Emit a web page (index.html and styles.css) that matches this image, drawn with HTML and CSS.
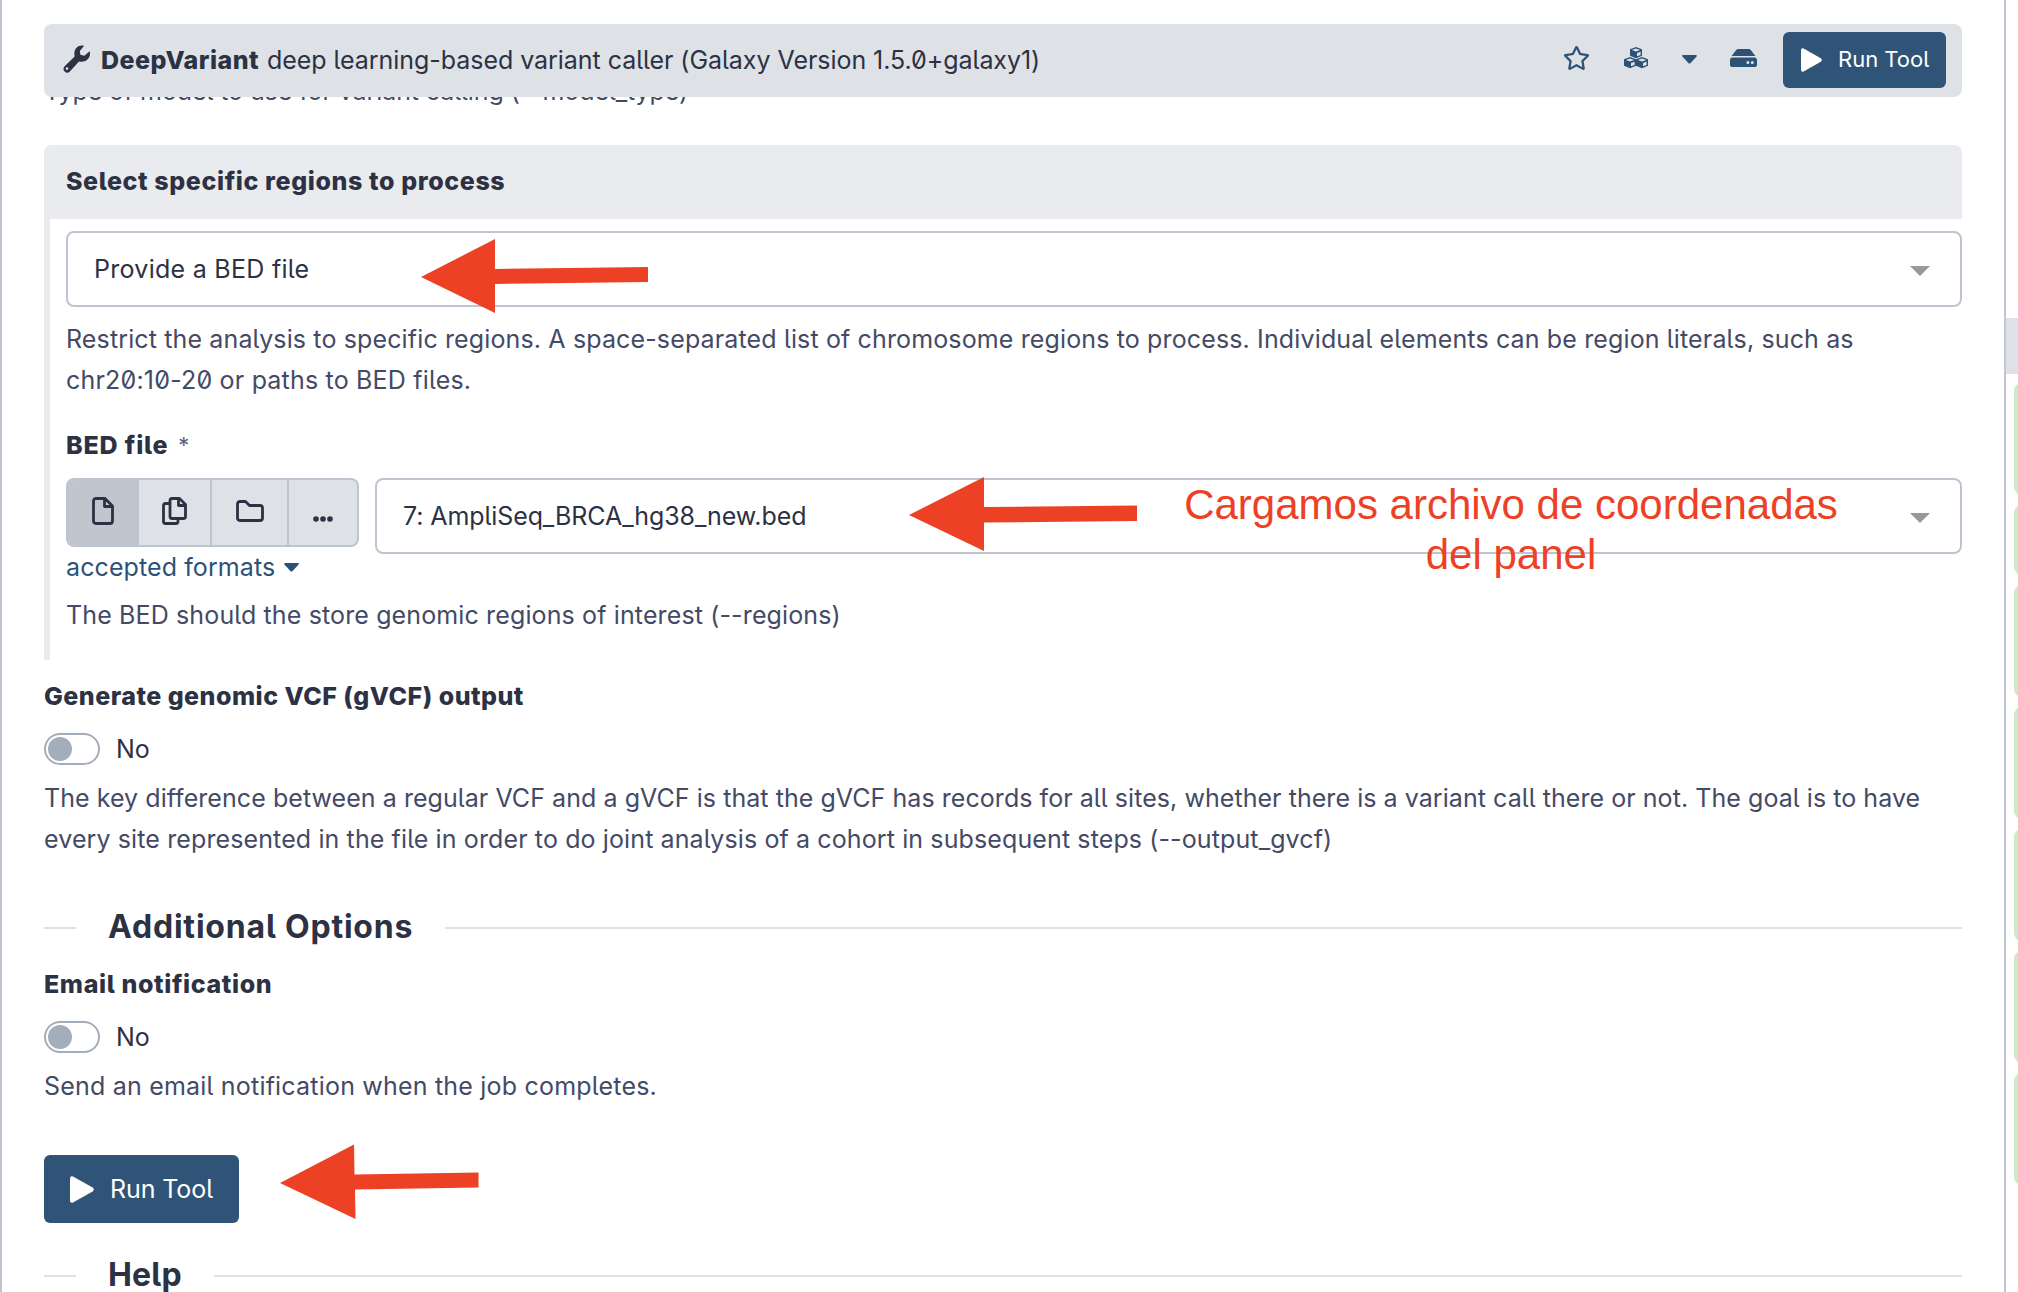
FILE: index.html
```html
<!DOCTYPE html>
<html lang="en">
<head>
<meta charset="utf-8">
<title>DeepVariant</title>
<link rel="stylesheet" href="styles.css">
</head>
<body>
<div class="app">
  <main class="center-panel">
    <header class="tool-header">
      <svg class="icon-wrench" viewBox="0 0 28 28"><path d="M26.6 6.2 21.4 10.8 17.4 9.8 16.8 6 21 0.9C16 -0.6 10.8 3 11.4 9.6L11.6 11.4 1.4 21.6A3.7 3.7 0 0 0 6.6 26.8L16 16.6C23 18 28.6 12.6 26.6 6.2ZM4 25A1.4 1.4 0 1 1 4 22.2 1.4 1.4 0 0 1 4 25Z" fill-rule="evenodd"/></svg>
      <h1 class="tool-title"><b class="tool-name">DeepVariant</b><span class="tool-desc">deep learning-based variant caller (Galaxy Version 1.5.0+galaxy1)</span></h1>
      <div class="tool-actions">
        <svg class="icon-star" viewBox="0 0 576 512"><path d="M528.1 171.5L382 150.2 316.7 17.8c-11.7-23.6-45.6-23.9-57.4 0L194 150.2 47.9 171.5c-26.2 3.8-36.7 36.1-17.7 54.6l105.7 103-25 145.5c-4.5 26.3 23.2 46 46.4 33.7L288 439.6l130.7 68.7c23.2 12.2 50.9-7.4 46.4-33.7l-25-145.5 105.7-103c19-18.5 8.5-50.8-17.7-54.6zM388.6 312.3l23.7 138.4L288 385.4l-124.3 65.3 23.7-138.4-100.6-98 139-20.2 62.2-126 62.2 126 139 20.2-100.6 98z"/></svg>
        <svg class="icon-cubes" viewBox="0 0 24 22"><g id="cube"><path d="M12 0 18 2.2V8.8L12 11.2 6 8.8V2.2Z"/><path class="face" d="M12 1.6 16.2 3 12 4.5 7.8 3ZM13 6 16.6 4.7V7.9L13 9.3Z"/></g><use href="#cube" x="-6" y="10"/><use href="#cube" x="6" y="10"/></svg>
        <svg class="icon-caret" viewBox="0 0 15 9"><path d="M1.2 0H13.8Q15.6 .3 14.4 1.8L8.4 8.2Q7.5 9 6.6 8.2L.6 1.8Q-.6 .3 1.2 0Z"/></svg>
        <svg class="icon-drive" viewBox="0 0 27 18"><path d="M1.6 7 6 1.2Q6.9 0 8.4 0H18.6Q20.1 0 21 1.2L25.4 7ZM2.6 8.4H24.4Q27 8.4 27 11V15.4Q27 18 24.4 18H2.6Q0 18 0 15.4V11Q0 8.4 2.6 8.4ZM17.9 11.9A1.4 1.4 0 1 0 17.9 14.9 1.4 1.4 0 0 0 17.9 11.9ZM22.3 11.9A1.4 1.4 0 1 0 22.3 14.9 1.4 1.4 0 0 0 22.3 11.9Z" fill-rule="evenodd"/></svg>
        <button class="run run-small"><svg class="icon-play" viewBox="0 0 24 27"><path d="M0 2.4Q.2 -.6 3 .4L22.6 11.6Q25 13.5 22.6 15.4L3 26.6Q.2 27.6 0 24.6Z"/></svg><span>Run Tool</span></button>
      </div>
    </header>
    <p class="help model-help">Type of model to use for variant calling (--model_type)</p>

    <section class="conditional">
      <h2 class="label conditional-title">Select specific regions to process</h2>
      <div class="conditional-body">
        <div class="select"><span class="t-provide">Provide a BED file</span><i class="select-caret"></i></div>
        <p class="help restrict-help"><span>Restrict the analysis to specific regions. A space-separated list of chromosome regions to process. Individual elements can be region literals, such as</span><br><span class="t-chr">chr20:10-20 or paths to BED files.</span></p>
        <h3 class="label bed-label"><span>BED file</span><span class="required">*</span></h3>
        <div class="data-row">
          <div class="data-side">
            <div class="button-group">
              <button class="active"><svg class="icon-file" viewBox="0 0 22 28"><path d="M4 1.5H13L20.5 9V24Q20.5 26.5 18 26.5H4Q1.5 26.5 1.5 24V4Q1.5 1.5 4 1.5ZM12.5 1.5V9.5H20.5"/></svg></button>
              <button><svg class="icon-copy" viewBox="0 0 25 28"><path d="M10 1.5H17.5L23.5 7.5V19.5Q23.5 21.5 21.5 21.5H10Q8 21.5 8 19.5V3.5Q8 1.5 10 1.5ZM16.5 1.5V8.5H23.5M8 6.5H3.5Q1.5 6.5 1.5 8.5V24.5Q1.5 26.5 3.5 26.5H14Q16 26.5 16 24.5V21.5"/></svg></button>
              <button><svg class="icon-folder" viewBox="0 0 28 22"><path d="M4 1.5H9.5L13.5 5.5H24Q26.5 5.5 26.5 8V18Q26.5 20.5 24 20.5H4Q1.5 20.5 1.5 18V4Q1.5 1.5 4 1.5Z"/></svg></button>
              <button><svg class="icon-dots" viewBox="0 0 20 6"><circle cx="3" cy="3" r="2.8"/><circle cx="10" cy="3" r="2.8"/><circle cx="17" cy="3" r="2.8"/></svg></button>
            </div>
            <a class="formats"><span>accepted formats</span><svg class="icon-caret" viewBox="0 0 15 9"><path d="M1.2 0H13.8Q15.6 .3 14.4 1.8L8.4 8.2Q7.5 9 6.6 8.2L.6 1.8Q-.6 .3 1.2 0Z"/></svg></a>
          </div>
          <div class="select data-select"><span>7: AmpliSeq_BRCA_hg38_new.bed</span><i class="select-caret"></i></div>
        </div>
        <p class="help bed-help">The BED should the store genomic regions of interest (--regions)</p>
      </div>
    </section>

    <section class="field">
      <h3 class="label generate-label">Generate genomic VCF (gVCF) output</h3>
      <div class="switch-row"><span class="switch"></span><span class="no">No</span></div>
      <p class="help gvcf-help"><span>The key difference between a regular VCF and a gVCF is that the gVCF has records for all sites, whether there is a variant call there or not. The goal is to have</span><br><span class="t-every">every site represented in the file in order to do joint analysis of a cohort in subsequent steps (--output_gvcf)</span></p>
    </section>

    <h2 class="separator options-separator"><span>Additional Options</span></h2>

    <section class="field email-field">
      <h3 class="label">Email notification</h3>
      <div class="switch-row"><span class="switch"></span><span class="no">No</span></div>
      <p class="help send-help">Send an email notification when the job completes.</p>
    </section>

    <button class="run run-large"><svg class="icon-play" viewBox="0 0 24 27"><path d="M0 2.4Q.2 -.6 3 .4L22.6 11.6Q25 13.5 22.6 15.4L3 26.6Q.2 27.6 0 24.6Z"/></svg><span>Run Tool</span></button>

    <h2 class="separator help-separator"><span>Help</span></h2>
  </main>
  <aside class="history">
    <div class="history-bar"></div>
    <div class="dataset"></div>
    <div class="dataset dataset-short"></div>
    <div class="dataset"></div>
    <div class="dataset"></div>
    <div class="dataset"></div>
    <div class="dataset"></div>
    <div class="dataset"></div>
  </aside>
  <svg class="annotations" viewBox="0 0 2018 1292">
    <path d="M421 277 495 239V269L648 267V282L495 284V313Z"/>
    <path d="M909 515 984 477V507L1137 505.500V521L984 522.500V551Z"/>
    <path d="M280 1183 354 1144.500 354.500 1174.500 478.500 1172.500V1187.500L355 1189.500 355.500 1219Z"/>
  </svg>
  <p class="note">Cargamos archivo de coordenadas<br>del panel</p>
</div>
</body>
</html>
```

FILE: styles.css
```css
* { box-sizing: border-box; }

body {
  margin: 0;
  background: #fff;
  color: #2c3143;
  font: 25px/41px Inter, "Noto Sans", sans-serif;
  font-feature-settings: "zero", "cv05";
}

h1, h2, h3, p { margin: 0; font-size: inherit; }
svg { display: block; flex: none; }
span { white-space: nowrap; }

button {
  margin: 0;
  border: 0;
  color: inherit;
  font: inherit;
  font-feature-settings: inherit;
}

.app {
  position: relative;
  display: flex;
  width: 2018px;
  height: 1292px;
  overflow: hidden;
}

.center-panel {
  width: 2006px;
  padding: 24px 42px 0;
  border-left: 2px solid #bdc6d0;
  border-right: 2px solid #c1c5d5;
}

.tool-header {
  position: relative;
  z-index: 1;
  display: flex;
  align-items: center;
  height: 73px;
  padding: 0 16px 0 19px;
  border-radius: 8px;
  background: #dee2e6;
}

.icon-wrench { width: 28px; height: 28px; margin: 0 10px 3px 0; fill: #2c3143; }
.tool-title { flex: 1; padding-bottom: 1px; font-weight: 400; }
.tool-name { display: inline-block; width: 166px; font-weight: 800; letter-spacing: .5px; }
.tool-desc { letter-spacing: -.045px; }
.tool-actions { display: flex; align-items: center; fill: #2c5277; }
.icon-star { width: 27px; height: 24px; margin: 0 34px 5px 0; }
.icon-cubes { width: 24px; height: 22px; margin: 0 34px 5px 0; }
.face { fill: #dee2e6; }
.icon-caret { width: 15px; height: 9px; fill: #2c5277; }
.tool-actions .icon-caret { margin: 0 33px 3px 0; }
.icon-drive { width: 27px; height: 18px; margin: 0 26px 5px 0; }

.run {
  display: flex;
  align-items: center;
  border-radius: 6px;
  background: #2f5477;
  color: #fff;
  fill: #fff;
}
.run-small { width: 163px; height: 56px; margin-bottom: 1px; padding: 0 18px 1px; gap: 16px; font-size: 22px; }
.run-small .icon-play { width: 21px; height: 24px; }
.run-large { width: 195px; height: 68px; margin-top: 48px; padding: 0 26px; gap: 16px; letter-spacing: -.1px; }
.run-large .icon-play { width: 24px; height: 27px; }

.help { color: #444a66; }
.model-help { margin-top: -26px; letter-spacing: -.09px; }

.conditional { margin-top: 33px; border-left: 6px solid #e9ebee; border-radius: 8px 8px 0 0; }
.label { font-weight: 800; letter-spacing: .62px; }
.conditional-title {
  height: 74px;
  margin-left: -6px;
  padding: 16px 22px 0;
  border-radius: 8px 8px 0 0;
  background: #e9ebee;
}
.conditional-body { height: 441px; padding: 12px 0 0 16px; }

.select {
  display: flex;
  align-items: center;
  justify-content: space-between;
  height: 76px;
  padding: 0 30px 0 26px;
  border: 2px solid #bdc6d0;
  border-radius: 8px;
}
.select-caret {
  border: 10px solid transparent;
  border-top-color: #999;
  border-bottom: 0;
  margin-top: 4px;
}
.t-provide { letter-spacing: .28px; }
.restrict-help { margin-top: 12px; letter-spacing: .136px; }
.t-chr { letter-spacing: .19px; }
.bed-label { display: flex; height: 41px; margin-top: 24px; letter-spacing: .85px; }
.required { margin-left: 10px; font-size: 22px; font-weight: 400; color: #5a6080; }

.data-row { display: flex; gap: 16px; height: 117px; margin-top: 12px; }
.data-side { width: 293px; }
.data-select { flex: 1; letter-spacing: -.09px; }
.button-group {
  display: grid;
  grid-template-columns: 69px 73px 77px 70px;
  height: 69px;
  border: 2px solid #bdc6d0;
  border-radius: 8px;
  background: #dee2e6;
  overflow: hidden;
}
.button-group button {
  display: flex;
  align-items: center;
  justify-content: center;
  padding: 0 0 4px;
  border-left: 2px solid #bdc6d0;
  background: none;
}
.button-group .active { border: 0; background: #c1c6ce; }
.button-group svg { fill: none; stroke: #2c3143; stroke-width: 2.800; stroke-linejoin: round; }
.icon-file { width: 22px; height: 28px; }
.icon-copy { width: 25px; height: 28px; }
.icon-folder { width: 28px; height: 22px; }
.button-group .icon-dots { width: 20px; height: 6px; margin-top: 16px; fill: #2c3143; stroke: none; }
.formats { display: flex; align-items: center; gap: 9px; color: #2c5277; letter-spacing: .1px; }
.bed-help { letter-spacing: .13px; }

.field { margin-top: 16px; }
.generate-label { letter-spacing: .49px; }
.switch-row { display: flex; align-items: center; gap: 16px; height: 32px; margin: 16px 0 13px; }
.switch {
  width: 56px;
  height: 32px;
  padding: 2px;
  border: 2px solid #a3aebb;
  border-radius: 16px;
}
.switch::before {
  content: "";
  display: block;
  width: 24px;
  height: 24px;
  border-radius: 50%;
  background: #a3aebb;
}
.gvcf-help { letter-spacing: .056px; }
.t-every { letter-spacing: .115px; }
.send-help { letter-spacing: .2px; }

.separator {
  display: flex;
  align-items: center;
  gap: 32px;
  font-size: 32px;
  font-weight: 700;
  letter-spacing: .8px;
}
.separator::before, .separator::after { content: ""; height: 2px; background: #dee2e6; }
.separator::before { width: 32px; }
.separator::after { flex: 1; }
.separator span { margin-top: -2px; }
.options-separator { margin-top: 48px; }
.email-field { margin-top: 17px; }
.help-separator { margin-top: 33px; letter-spacing: .2px; }

.history { width: 12px; padding: 318px 0 0 8px; overflow: hidden; }
.history-bar { height: 56px; margin: 0 0 9px -8px; background: #dee2e6; }
.dataset { width: 40px; height: 112px; margin-bottom: 10px; border-radius: 8px; background: #c9ecc5; }
.dataset-short { height: 70px; }

.annotations { position: absolute; inset: 0; z-index: 2; width: 2018px; height: 1292px; fill: #ec4125; }
.note {
  position: absolute;
  z-index: 2;
  left: 1171px;
  top: 480px;
  width: 680px;
  color: #ec4125;
  font: 42px/50px "Liberation Sans", Arial, sans-serif;
  text-align: center;
}
```
